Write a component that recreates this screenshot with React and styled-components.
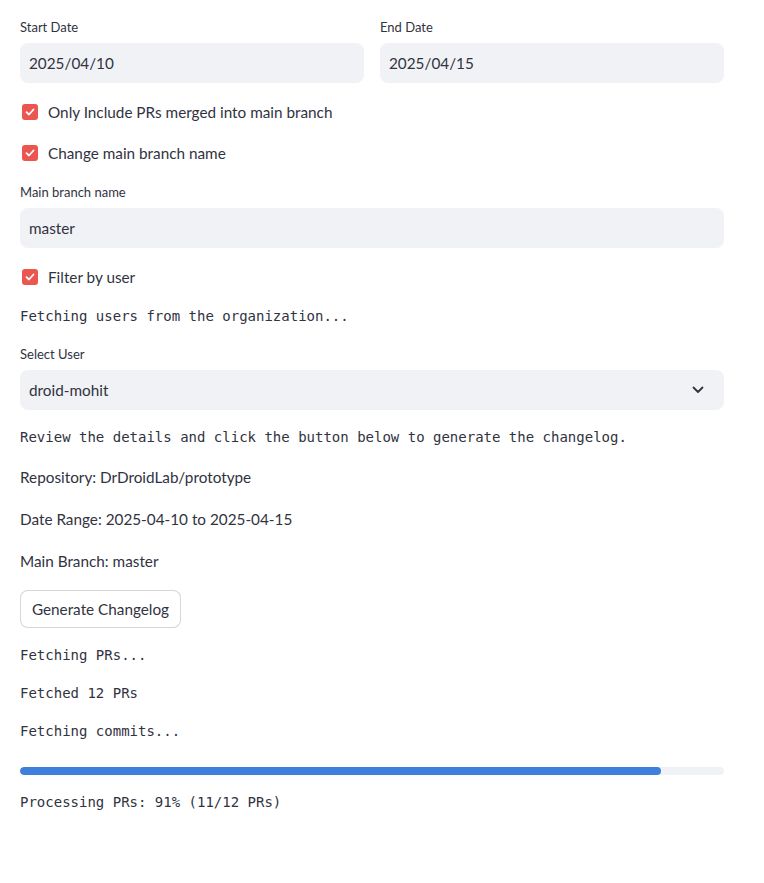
import React from "react";
import styled, { createGlobalStyle } from "styled-components";

const Global = createGlobalStyle`
  html, body { margin: 0; padding: 0; background: #ffffff; }
  body {
    font-family: "Source Sans Pro", Lato, "Noto Sans", sans-serif;
    color: #31333f;
    -webkit-font-smoothing: antialiased;
  }
  * { box-sizing: border-box; }
`;

const Page = styled.main`
  width: 704px;
  margin-left: 20px;
  padding-top: 16px;
  padding-bottom: 40px;
  display: flex;
  flex-direction: column;
  gap: 16px;
`;

const Columns = styled.div`
  display: grid;
  grid-template-columns: 1fr 1fr;
  gap: 16px;
`;

const Field = styled.div`
  display: flex;
  flex-direction: column;
`;

const Label = styled.label`
  font-size: 13px;
  line-height: 22px;
  height: 22px;
  margin-bottom: 5px;
  color: #31333f;
`;

const InputBox = styled.div`
  height: 40px;
  border-radius: 8px;
  background: #f0f2f6;
  display: flex;
  align-items: center;
  justify-content: space-between;
  padding: 0 20px 0 9px;
  font-size: 15.3px;
  color: #31333f;
`;

const CheckRow = styled.div`
  display: flex;
  align-items: center;
  height: 25px;
  gap: 10px;
  font-size: 15.3px;
  padding-left: 2px;
`;

const Box = styled.span`
  width: 16px;
  height: 16px;
  border-radius: 3px;
  background: #ec5650;
  display: inline-flex;
  align-items: center;
  justify-content: center;
  flex: none;
`;

const Mono = styled.div`
  font-family: "DejaVu Sans Mono", "Liberation Mono", monospace;
  font-size: 14px;
  line-height: 22px;
  height: 22px;
  color: #31333f;
  white-space: pre;
`;

const Para = styled.p`
  margin: 0;
  font-size: 15.3px;
  line-height: 26px;
`;

const Button = styled.button`
  align-self: flex-start;
  height: 38px;
  width: 161px;
  border: 1px solid rgba(49, 51, 63, 0.2);
  border-radius: 8px;
  background: #ffffff;
  font-family: inherit;
  font-size: 15.3px;
  color: #31333f;
  padding: 0;
  white-space: nowrap;
`;

const Progress = styled.div`
  padding-top: 9px;
`;

const Track = styled.div`
  height: 8px;
  border-radius: 8px;
  background: #f0f2f6;
  overflow: hidden;
`;

const Fill = styled.div`
  height: 100%;
  border-radius: 8px;
  background: #3d7fdb;
`;

const Check = () => (
  <Box>
    <svg width="12" height="12" viewBox="0 0 12 12">
      <path d="M2.5 6.2 L5 8.5 L9.5 3.5" fill="none" stroke="#fff" strokeWidth="1.8" strokeLinecap="round" strokeLinejoin="round" />
    </svg>
  </Box>
);

const CheckboxItem = ({ children }) => (
  <CheckRow>
    <Check />
    <span>{children}</span>
  </CheckRow>
);

const Chevron = () => (
  <svg width="12" height="8" viewBox="0 0 12 8">
    <path d="M1.5 1.5 L6 6 L10.5 1.5" fill="none" stroke="#31333f" strokeWidth="1.8" strokeLinecap="round" strokeLinejoin="round" />
  </svg>
);

export default function App() {
  const pct = 91;
  return (
    <>
      <Global />
      <Page>
        <Columns>
          <Field>
            <Label>Start Date</Label>
            <InputBox>2025/04/10</InputBox>
          </Field>
          <Field>
            <Label>End Date</Label>
            <InputBox>2025/04/15</InputBox>
          </Field>
        </Columns>
        <CheckboxItem>Only Include PRs merged into main branch</CheckboxItem>
        <CheckboxItem>Change main branch name</CheckboxItem>
        <Field>
          <Label>Main branch name</Label>
          <InputBox>master</InputBox>
        </Field>
        <CheckboxItem>Filter by user</CheckboxItem>
        <Mono>Fetching users from the organization...</Mono>
        <Field>
          <Label>Select User</Label>
          <InputBox>
            <span>droid-mohit</span>
            <Chevron />
          </InputBox>
        </Field>
        <Mono>Review the details and click the button below to generate the changelog.</Mono>
        <Para>Repository: DrDroidLab/prototype</Para>
        <Para>Date Range: 2025-04-10 to 2025-04-15</Para>
        <Para>Main Branch: master</Para>
        <Button>Generate Changelog</Button>
        <Mono>Fetching PRs...</Mono>
        <Mono>Fetched 12 PRs</Mono>
        <Mono>Fetching commits...</Mono>
        <Progress>
          <Track>
            <Fill style={{ width: `${pct}%` }} />
          </Track>
        </Progress>
        <Mono>Processing PRs: 91% (11/12 PRs)</Mono>
      </Page>
    </>
  );
}
